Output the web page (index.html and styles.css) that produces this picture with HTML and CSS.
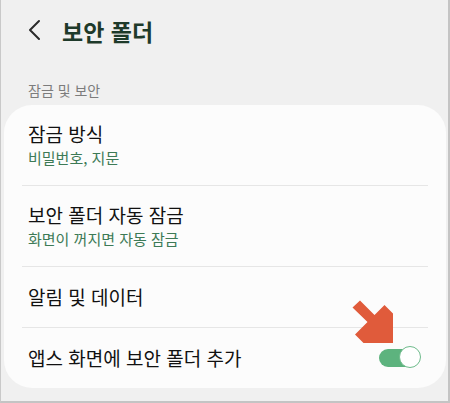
FILE: index.html
```html
<!DOCTYPE html>
<html lang="ko">
<head>
<meta charset="utf-8">
<link rel="stylesheet" href="styles.css">
</head>
<body>
<div class="screen">
  <header class="topbar">
    <svg class="back" width="14" height="22" viewBox="0 0 14 22">
      <path d="M12 2 L3 11 L12 20" fill="none" stroke="#2b2b2b" stroke-width="2" stroke-linecap="round" stroke-linejoin="round"/>
    </svg>
    <h1 class="title">보안 폴더</h1>
  </header>
  <div class="section">잠금 및 보안</div>
  <div class="card">
    <div class="item two">
      <div class="item-title">잠금 방식</div>
      <div class="item-sub">비밀번호, 지문</div>
    </div>
    <div class="divider"></div>
    <div class="item two">
      <div class="item-title">보안 폴더 자동 잠금</div>
      <div class="item-sub">화면이 꺼지면 자동 잠금</div>
    </div>
    <div class="divider"></div>
    <div class="item one">
      <div class="item-title">알림 및 데이터</div>
    </div>
    <div class="divider"></div>
    <div class="item one row">
      <div class="item-title">앱스 화면에 보안 폴더 추가</div>
      <div class="toggle"><span class="thumb"></span></div>
    </div>
  </div>
  <svg class="arrow" width="48" height="50" viewBox="349 297 48 50">
    <polygon fill="#e05b3b" points="360,300.5 374.5,315 384.5,305 393,313.5 393,343 363.5,343 355,334.5 367.5,322 352.5,307.5"/>
  </svg>
</div>
</body>
</html>
```
FILE: styles.css
```css
html, body {
  margin: 0;
  padding: 0;
}
body {
  font-family: "Noto Sans CJK KR", "Noto Sans", sans-serif;
  background: #f0f0f0;
}
.screen {
  position: relative;
  width: 450px;
  height: 403px;
  box-sizing: border-box;
  background: #f0f0f0;
  border-left: 1px solid #c9c9c9;
  border-right: 2px solid #c4c4c4;
  border-bottom: 2px solid #c4c4c4;
  overflow: hidden;
}
.topbar {
  height: 62px;
  display: flex;
  align-items: center;
  padding-left: 26px;
}
.back {
  display: block;
  margin-top: -2px;
}
.title {
  margin: 0 0 0 21px;
  font-size: 23px;
  font-weight: 700;
  color: #1e3a2a;
  line-height: 30px;
}
.section {
  margin-top: 18px;
  padding-left: 27px;
  font-size: 14px;
  line-height: 20px;
  color: #7c7c7c;
}
.card {
  margin: 5px 2px 0 3px;
  background: #fcfcfc;
  border-radius: 28px;
}
.item {
  padding: 0 26px 0 24px;
}
.item.two {
  padding-top: 17px;
  padding-bottom: 15px;
}
.item.one {
  padding-top: 18px;
  padding-bottom: 18px;
}
.item.row {
  display: flex;
  align-items: center;
  justify-content: space-between;
}
.item-title {
  font-size: 19px;
  font-weight: 400;
  line-height: 24px;
  color: #111111;
}
.item-sub {
  font-size: 15px;
  line-height: 24px;
  color: #3d7a56;
}
.divider {
  height: 1px;
  margin: 0 18px;
  background: #e6e6e6;
}
.toggle {
  position: relative;
  width: 41px;
  height: 18px;
  border-radius: 9px;
  background: #5db37e;
}
.thumb {
  position: absolute;
  right: -1px;
  top: -3px;
  width: 20px;
  height: 20px;
  border-radius: 50%;
  background: #ffffff;
  border: 1.5px solid #6fbb8c;
}
.arrow {
  position: absolute;
  left: 348px;
  top: 297px;
}
```
